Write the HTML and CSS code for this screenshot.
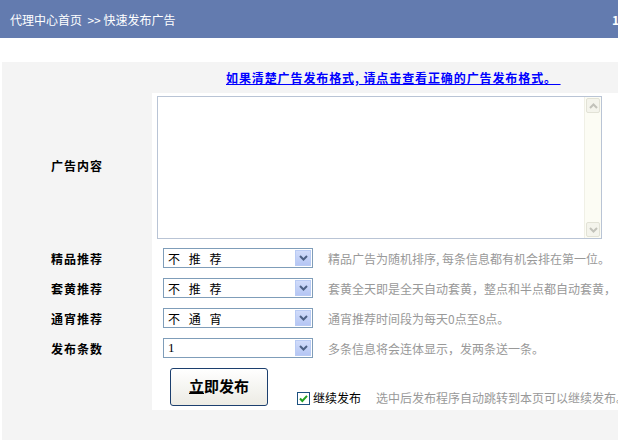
FILE: index.html
```html
<!DOCTYPE html>
<html lang="zh-CN">
<head>
<meta charset="utf-8">
<title>快速发布广告</title>
<link rel="stylesheet" href="styles.css">
</head>
<body>
<div class="header">
  <span class="crumb">代理中心首页&nbsp; &gt;&gt; 快速发布广告</span>
  <span class="num">1</span>
</div>
<div class="gap"></div>
<div class="panel">
  <div class="notice"><a href="#">如果清楚广告发布格式, 请点击查看正确的广告发布格式。 </a></div>
  <div class="form">
    <div class="label tall">广告内容</div>
    <div class="cell tallcell">
      <div class="ta">
        <textarea></textarea>
        <div class="sb">
          <div class="sbbtn"><svg width="9" height="6" viewBox="0 0 9 6"><path d="M1 5 L4.5 1.5 L8 5" fill="none" stroke="#C2C2BA" stroke-width="2"/></svg></div>
          <div class="sbtrack"></div>
          <div class="sbbtn"><svg width="9" height="6" viewBox="0 0 9 6"><path d="M1 1 L4.5 4.5 L8 1" fill="none" stroke="#C2C2BA" stroke-width="2"/></svg></div>
        </div>
      </div>
    </div>

    <div class="label">精品推荐</div>
    <div class="cell row">
      <div class="sel"><span class="val">不 推 荐</span><span class="arr"><svg width="9" height="6" viewBox="0 0 9 6"><path d="M1 1 L4.5 4.5 L8 1" fill="none" stroke="#4D6185" stroke-width="2"/></svg></span></div>
      <span class="help">精品广告为随机排序, 每条信息都有机会排在第一位。</span>
    </div>

    <div class="label">套黄推荐</div>
    <div class="cell row">
      <div class="sel"><span class="val">不 推 荐</span><span class="arr"><svg width="9" height="6" viewBox="0 0 9 6"><path d="M1 1 L4.5 4.5 L8 1" fill="none" stroke="#4D6185" stroke-width="2"/></svg></span></div>
      <span class="help">套黄全天即是全天自动套黄，整点和半点都自动套黄，</span>
    </div>

    <div class="label">通宵推荐</div>
    <div class="cell row">
      <div class="sel"><span class="val">不 通 宵</span><span class="arr"><svg width="9" height="6" viewBox="0 0 9 6"><path d="M1 1 L4.5 4.5 L8 1" fill="none" stroke="#4D6185" stroke-width="2"/></svg></span></div>
      <span class="help">通宵推荐时间段为每天0点至8点。</span>
    </div>

    <div class="label">发布条数</div>
    <div class="cell row">
      <div class="sel"><span class="val num1">1</span><span class="arr"><svg width="9" height="6" viewBox="0 0 9 6"><path d="M1 1 L4.5 4.5 L8 1" fill="none" stroke="#4D6185" stroke-width="2"/></svg></span></div>
      <span class="help">多条信息将会连体显示，发两条送一条。</span>
    </div>

    <div class="label"></div>
    <div class="cell btnrow">
      <button class="submit"><u>立</u>即发布</button>
      <span class="chk"><svg width="13" height="13" viewBox="0 0 13 13"><rect x="0.5" y="0.5" width="12" height="12" fill="#fff" stroke="#1C5180"/><path d="M3 6.5 L5.3 9 L10 3.8" fill="none" stroke="#21A121" stroke-width="2"/></svg></span>
      <span class="chklabel">继续发布</span>
      <span class="help2">选中后发布程序自动跳转到本页可以继续发布。</span>
    </div>
  </div>
</div>
</body>
</html>
```
FILE: styles.css
```css
html, body {
  margin: 0;
  padding: 0;
  background: #fff;
  font-family: "Noto Sans CJK SC", "Liberation Sans", sans-serif;
  font-size: 12px;
  overflow: hidden;
}
.header {
  height: 38px;
  background: #637BAF;
  color: #fff;
  display: flex;
  align-items: center;
  justify-content: space-between;
  padding-left: 10px;
  white-space: nowrap;
}
.header .num {
  font-weight: bold;
  width: 6px;
  overflow: hidden;
}
.gap { height: 24px; }
.panel {
  margin-left: 2px;
  background: #F4F4F4;
  padding-bottom: 30px;
  width: 640px;
}
.notice {
  height: 31px;
  display: flex;
  align-items: center;
  padding-left: 224px;
  white-space: nowrap;
}
.notice a {
  color: #0000FF;
  font-weight: bold;
  text-decoration: underline;
  white-space: pre;
  letter-spacing: 0.9px;
}
.form {
  display: grid;
  grid-template-columns: 150px 1fr;
}
.label {
  display: flex;
  align-items: center;
  justify-content: center;
  font-weight: bold;
  color: #000;
  height: 30px;
  letter-spacing: 1px;
}
.label.tall {
  height: 150px;
  padding-bottom: 6px;
  box-sizing: border-box;
}
.cell {
  background: #fff;
  white-space: nowrap;
}
.tallcell {
  height: 150px;
  padding: 3px 0 0 5px;
  box-sizing: border-box;
}
.ta {
  width: 445px;
  height: 143px;
  box-sizing: border-box;
  border: 1px solid #B9C4D5;
  display: flex;
  background: #fff;
}
.ta textarea {
  flex: 1;
  border: 0;
  outline: none;
  resize: none;
  margin: 0;
  padding: 0;
  background: #fff;
}
.sb {
  width: 16px;
  background: #FCFCF4;
  display: flex;
  flex-direction: column;
  border-left: 1px solid #F0F0E6;
}
.sbbtn {
  height: 15px;
  margin: 1px;
  box-sizing: border-box;
  border: 1px solid #E2E2D6;
  border-radius: 2px;
  background: #F4F4EC;
  display: flex;
  align-items: center;
  justify-content: center;
}
.sbtrack { flex: 1; }
.row {
  height: 30px;
  display: flex;
  align-items: center;
  padding-left: 11px;
}
.sel {
  width: 150px;
  height: 20px;
  box-sizing: border-box;
  border: 1px solid #7F9DB9;
  background: #fff;
  display: flex;
  align-items: center;
  justify-content: space-between;
}
.val {
  padding-left: 4px;
  color: #000;
  letter-spacing: 3px;
}
.num1 { font-family: "Liberation Serif", serif; font-size: 13px; letter-spacing: 0; }
.arr {
  width: 16px;
  height: 16px;
  margin-right: 1px;
  box-sizing: border-box;
  border: 1px solid #B9CBF4;
  background: linear-gradient(#D1DCFA, #B5C6F4);
  display: flex;
  align-items: center;
  justify-content: center;
}
.help {
  margin-left: 15px;
  color: #999;
}
.btnrow {
  height: 47px;
  display: flex;
  align-items: flex-start;
  padding-left: 18px;
  padding-top: 5px;
  box-sizing: border-box;
}
.submit {
  width: 98px;
  height: 38px;
  margin: 0;
  border: 1px solid #1C3F6E;
  border-radius: 3px;
  background: linear-gradient(#FFFFFF, #ECEBE4);
  font-family: "Noto Sans CJK SC", sans-serif;
  font-size: 15px;
  font-weight: bold;
  color: #000;
  padding: 0 0 3px 0;
}
.submit u { text-decoration: underline; }
.chk {
  margin-left: 29px;
  margin-top: 24px;
  height: 13px;
  display: flex;
}
.chklabel {
  margin-left: 3px;
  margin-top: 21px;
  color: #000;
}
.help2 {
  margin-left: 15px;
  margin-top: 21px;
  color: #999;
}
```
